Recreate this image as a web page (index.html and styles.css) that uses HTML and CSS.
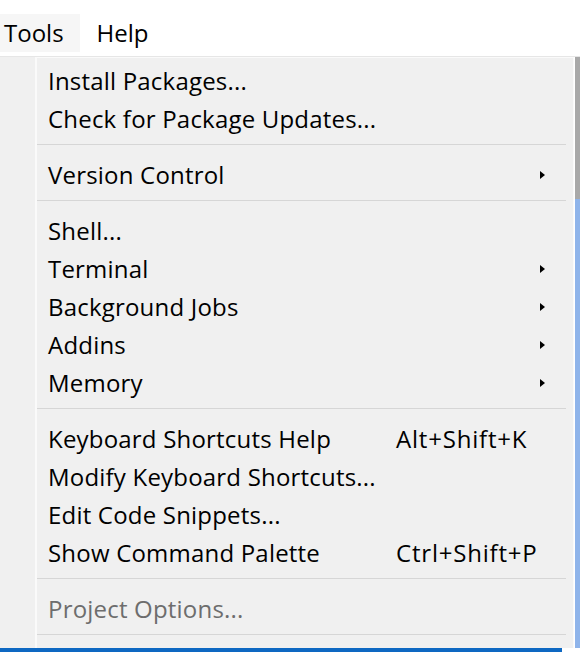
FILE: index.html
```html
<!DOCTYPE html>
<html>
<head>
<meta charset="utf-8">
<link rel="stylesheet" href="styles.css">
</head>
<body>
<div class="menubar">
  <span class="top-item active">Tools</span>
  <span class="top-item">Help</span>
</div>
<div class="stage">
  <div class="gutter"></div>
  <div class="menu">
    <div class="item"><span class="label">Install Packages...</span></div>
    <div class="item"><span class="label">Check for Package Updates...</span></div>
    <div class="sep"></div>
    <div class="item"><span class="label">Version Control</span><span class="arrow"></span></div>
    <div class="sep"></div>
    <div class="item"><span class="label">Shell...</span></div>
    <div class="item"><span class="label">Terminal</span><span class="arrow"></span></div>
    <div class="item"><span class="label">Background Jobs</span><span class="arrow"></span></div>
    <div class="item"><span class="label">Addins</span><span class="arrow"></span></div>
    <div class="item"><span class="label">Memory</span><span class="arrow"></span></div>
    <div class="sep"></div>
    <div class="item"><span class="label">Keyboard Shortcuts Help</span><span class="shortcut">Alt+Shift+K</span></div>
    <div class="item"><span class="label">Modify Keyboard Shortcuts...</span></div>
    <div class="item"><span class="label">Edit Code Snippets...</span></div>
    <div class="item"><span class="label">Show Command Palette</span><span class="shortcut">Ctrl+Shift+P</span></div>
    <div class="sep"></div>
    <div class="item disabled"><span class="label">Project Options...</span></div>
    <div class="sep"></div>
  </div>
  <div class="edge">
    <div class="edge-grey"></div>
    <div class="edge-blue"></div>
  </div>
</div>
<div class="bottom-bar"></div>
</body>
</html>
```
FILE: styles.css
```css
html, body {
  margin: 0;
  padding: 0;
  background: #ffffff;
  font-family: "Open Sans", "Noto Sans", sans-serif;
  color: #000;
}
.menubar {
  display: flex;
  align-items: flex-end;
  border-bottom: 1px solid #e6e6e6;
  box-sizing: border-box;
  height: 57px;
}
.top-item {
  font-size: 24px;
  height: 38px;
  line-height: 38px;
  padding: 0 0 0 17px;
  margin-bottom: 4px;
}
.top-item.active {
  background: #f6f6f6;
  padding: 0 16px 0 4px;
}
.stage {
  display: flex;
  background: #f0f0f0;
  height: 591px;
}
.gutter {
  width: 35px;
  border-right: 2px solid #fafafa;
  background: #f0f0f0;
}
.menu {
  width: 537px;
  background: #f0f0f0;
  border-top: 1px solid #fafafa;
  border-right: 1px solid #fafafa;
  padding-top: 4px;
  box-sizing: border-box;
}
.item {
  height: 38px;
  box-sizing: border-box;
  padding-bottom: 2px;
  display: flex;
  align-items: center;
  padding-left: 11px;
  font-size: 24px;
  letter-spacing: 0.2px;
  position: relative;
}
.label {
  width: 348px;
  white-space: nowrap;
}
.shortcut {
  white-space: nowrap;
  letter-spacing: 0.8px;
}
.item.disabled {
  color: #6d6d6d;
}
.arrow {
  position: absolute;
  left: 503px;
  top: 15px;
  width: 0;
  height: 0;
  border-top: 4px solid transparent;
  border-bottom: 4px solid transparent;
  border-left: 5px solid #000;
}
.sep {
  height: 1px;
  background: #d6d6d6;
  margin: 6px 7px 11px 0;
}
.edge {
  flex: 1;
  display: flex;
  flex-direction: column;
  border-left: 1px solid #ffffff;
}
.edge-grey {
  height: 142px;
  background: #a9a9a9;
}
.edge-blue {
  flex: 1;
  background: #8fb4ea;
}
.bottom-bar {
  height: 4px;
  width: 562px;
  background: #0e68c2;
}
```
